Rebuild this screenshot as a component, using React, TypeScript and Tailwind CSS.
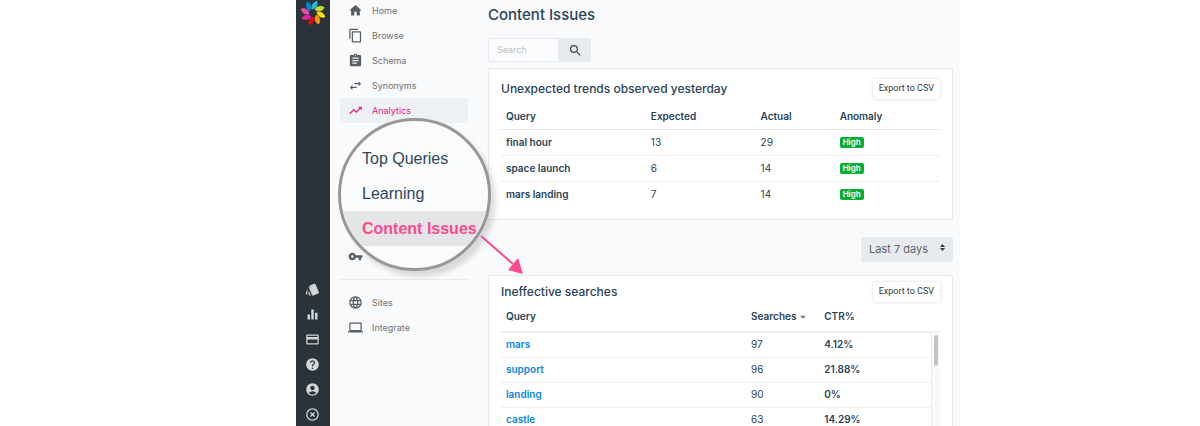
import * as React from 'react';
import type { IconType } from 'react-icons';
import {
  MdAccountCircle,
  MdArrowDropDown,
  MdAssignment,
  MdContentCopy,
  MdCreditCard,
  MdEqualizer,
  MdHelp,
  MdHighlightOff,
  MdHome,
  MdLanguage,
  MdLaptop,
  MdSearch,
  MdStyle,
  MdSwapHoriz,
  MdTrendingUp,
  MdVpnKey,
} from 'react-icons/md';

const railItems: { label: string; icon: IconType }[] = [
  { label: 'Collections', icon: MdStyle },
  { label: 'Reports', icon: MdEqualizer },
  { label: 'Billing', icon: MdCreditCard },
  { label: 'Help', icon: MdHelp },
  { label: 'Account', icon: MdAccountCircle },
  { label: 'Sign out', icon: MdHighlightOff },
];

const navItems: { label: string; icon: IconType; active?: boolean }[] = [
  { label: 'Home', icon: MdHome },
  { label: 'Browse', icon: MdContentCopy },
  { label: 'Schema', icon: MdAssignment },
  { label: 'Synonyms', icon: MdSwapHoriz },
  { label: 'Analytics', icon: MdTrendingUp, active: true },
];

const footerItems = [
  { label: 'Sites', icon: MdLanguage },
  { label: 'Integrate', icon: MdLaptop },
];

const trends = [
  { query: 'final hour', expected: 13, actual: 29, anomaly: 'High' },
  { query: 'space launch', expected: 6, actual: 14, anomaly: 'High' },
  { query: 'mars landing', expected: 7, actual: 14, anomaly: 'High' },
];

const searches = [
  { query: 'mars', searches: 97, ctr: '4.12%' },
  { query: 'support', searches: 96, ctr: '21.88%' },
  { query: 'landing', searches: 90, ctr: '0%' },
  { query: 'castle', searches: 63, ctr: '14.29%' },
];

const petals = ['#27b6d9', '#c5d92d', '#ffe000', '#f59a12', '#e30613', '#e6249a', '#ee4fa5', '#0a84c6'];

function Logo() {
  return (
    <svg viewBox="-13 -13 26 26" className="w-[26px] h-[26px]" aria-hidden="true">
      {petals.map((color, i) => (
        <path
          key={color}
          d="M-1.8 -3.2C-4 -7 -1.6 -11.2 1.8 -12.8C4.2 -9.4 3 -5.4 -1.8 -3.2Z"
          fill={color}
          transform={`rotate(${i * 45 + 10})`}
        />
      ))}
    </svg>
  );
}

function NavRow({ label, icon: Icon, active }: { label: string; icon: IconType; active?: boolean }) {
  return (
    <a
      href="#"
      className={`flex items-center h-[25px] pl-2 gap-[9px] rounded-xs text-[9px] ${
        active ? 'bg-[#edf1f4] text-[#f3187c]' : 'text-[#6f7275]'
      }`}
    >
      <Icon className={`w-[15px] h-[15px] ${active ? '' : 'text-[#5b5e61]'}`} />
      {label}
    </a>
  );
}

function Lens() {
  return (
    <div className="absolute -left-[2px] -top-[5px] w-[153px] h-[153px] rounded-full border-[3px] border-[#969796] bg-[#fafbfd] overflow-hidden pt-5 shadow-[5px_6px_5px_rgba(0,0,0,0.13)] font-['Liberation_Sans',sans-serif] text-base text-[#2f465c]">
      <a href="#" className="flex items-center h-[35px] pl-[21px]">Top Queries</a>
      <a href="#" className="flex items-center h-[35px] pl-[21px]">Learning</a>
      <a href="#" className="flex items-center h-[35px] pl-[21px] bg-[#e4e5e7] font-bold text-[#fb4a8f] whitespace-nowrap">
        Content Issues
      </a>
    </div>
  );
}

function Card({ title, dense, children }: { title: string; dense?: boolean; children: React.ReactNode }) {
  return (
    <section
      className={`bg-white border border-[#e6eaee] rounded-xs shadow-[0_0_1px_#dde3e8] px-3 pb-3 ${
        dense ? 'pt-[6px]' : 'pt-[10px]'
      }`}
    >
      <div className="flex items-center justify-between h-5">
        <h2 className="text-[12px] font-medium">{title}</h2>
        <button className="h-5 px-[6px] font-[Roboto,sans-serif] text-[9px] text-[#34383c] bg-white rounded-xs shadow-[0_0_3px_rgba(0,0,0,0.16)]">
          Export to CSV
        </button>
      </div>
      {children}
    </section>
  );
}

export default function App() {
  return (
    <div className="h-screen overflow-hidden bg-white pl-[296px] pr-[240px] font-[Inter,sans-serif] text-[#2a4358]">
      <div className="flex h-full bg-[#f9fafc]">
        <aside className="flex flex-col items-center justify-between w-[34px] shrink-0 bg-[#2b333a] pb-1">
          <Logo />
          <div className="flex flex-col gap-[10px] pr-[2px] text-[#d4d5d6]">
            {railItems.map(({ label, icon: Icon }) => (
              <button key={label} aria-label={label}>
                <Icon className="w-[15px] h-[15px]" />
              </button>
            ))}
          </div>
        </aside>

        <nav className="relative z-10 w-[138px] shrink-0 pl-[10px] -mt-[2px]">
          {navItems.map((item) => (
            <NavRow key={item.label} {...item} />
          ))}
          <div className="relative z-10 h-[121px]">
            <Lens />
            {/* pointer from the magnified entry to the card it opens */}
            <svg
              className="absolute left-[139px] top-[110px] w-[46px] h-[44px]"
              viewBox="0 0 46 44"
              aria-hidden="true"
            >
              <path d="M2 3L34 31" stroke="#fb4a8f" strokeWidth="2" />
              <path d="M44 41L29 37L39 25Z" fill="#fb4a8f" />
            </svg>
          </div>
          <NavRow label="" icon={MdVpnKey} />
          <hr className="mt-[10px] mb-[10px] border-[#e7eaed]" />
          {footerItems.map((item) => (
            <NavRow key={item.label} {...item} />
          ))}
        </nav>

        <main className="flex-1 min-w-0 pl-5 pr-[7px] pt-1">
          <h1 className="text-[15px] leading-[22px] font-medium">Content Issues</h1>

          <form className="flex w-[103px] h-6 mt-3 mb-[6px]">
            <input
              type="text"
              aria-label="Search"
              placeholder="Search"
              className="w-[71px] px-2 text-[9px] bg-[#fbfcfd] border border-[#e6eaee] rounded-l-xs placeholder:text-[#b9bdc0]"
            />
            <button
              type="button"
              aria-label="Run search"
              className="flex flex-1 items-center justify-center bg-[#e8ebee] rounded-r-xs text-[#44494e]"
            >
              <MdSearch className="w-[15px] h-[15px]" />
            </button>
          </form>

          <Card title="Unexpected trends observed yesterday">
            <table className="w-full table-fixed text-left text-[10px]">
              <thead>
                <tr className="h-[30px] border-b border-[#dfe5ea]">
                  <th className="w-[33%] px-[5px] pt-[5px] font-semibold">Query</th>
                  <th className="w-[25%] px-[5px] pt-[5px] font-semibold">Expected</th>
                  <th className="w-[18%] px-[5px] pt-[5px] font-semibold">Actual</th>
                  <th className="px-[5px] pt-[5px] font-semibold">Anomaly</th>
                </tr>
              </thead>
              <tbody>
                {trends.map((row) => (
                  <tr key={row.query} className="h-[26px] border-b border-[#edf0f2] last:border-0">
                    <td className="px-[5px] font-semibold">{row.query}</td>
                    <td className="px-[5px]">{row.expected}</td>
                    <td className="px-[5px]">{row.actual}</td>
                    <td className="px-[5px]">
                      <span className="block w-fit h-[11px] px-[3px] rounded-xs bg-[#06ad39] text-[8px] leading-[11px] font-semibold text-white">
                        {row.anomaly}
                      </span>
                    </td>
                  </tr>
                ))}
              </tbody>
            </table>
          </Card>

          <div className="relative w-[92px] h-[25px] my-[15px] ml-auto">
            <select
              aria-label="Period"
              className="appearance-none w-full h-full pl-2 bg-[#e8ebee] rounded-xs text-[11px] text-[#5b646c]"
            >
              <option>Last 7 days</option>
            </select>
            <svg
              className="absolute right-2 top-[9px] w-[5px] h-[7px] pointer-events-none"
              viewBox="0 0 5 7"
              fill="#333a40"
              aria-hidden="true"
            >
              <path d="M2.5 0L5 3H0ZM2.5 7L0 4H5Z" />
            </svg>
          </div>

          <Card title="Ineffective searches" dense>
            <div className="flex">
              <table className="flex-1 table-fixed text-left text-[10px]">
                <thead>
                  <tr className="h-[30px] border-b-2 border-[#edf0f2]">
                    <th className="w-[57%] px-[5px] font-semibold">Query</th>
                    <th className="w-[17%] px-[5px] font-semibold">
                      <span className="flex items-center whitespace-nowrap">
                        Searches
                        <MdArrowDropDown className="w-[14px] h-[14px] text-[#6b7782]" />
                      </span>
                    </th>
                    <th className="px-[5px] font-semibold">CTR%</th>
                  </tr>
                </thead>
                <tbody>
                  {searches.map((row) => (
                    <tr key={row.query} className="h-[25px] border-b border-[#edf0f2]">
                      <td className="px-[5px] font-semibold">
                        <a href="#" className="text-[#0a86e0]">{row.query}</a>
                      </td>
                      <td className="px-[5px]">{row.searches}</td>
                      <td className="px-[5px] font-semibold">{row.ctr}</td>
                    </tr>
                  ))}
                </tbody>
              </table>
              <div className="flex flex-col w-[9px]">
                <div className="h-[31px] border-b-2 border-[#edf0f2]" />
                <div className="flex-1 pt-[2px] px-[2px] bg-[#fafafa] border-l border-[#ececec]">
                  <div className="h-[31px] rounded-full bg-[#c3c4c5]" />
                </div>
              </div>
            </div>
          </Card>
        </main>
      </div>
    </div>
  );
}
